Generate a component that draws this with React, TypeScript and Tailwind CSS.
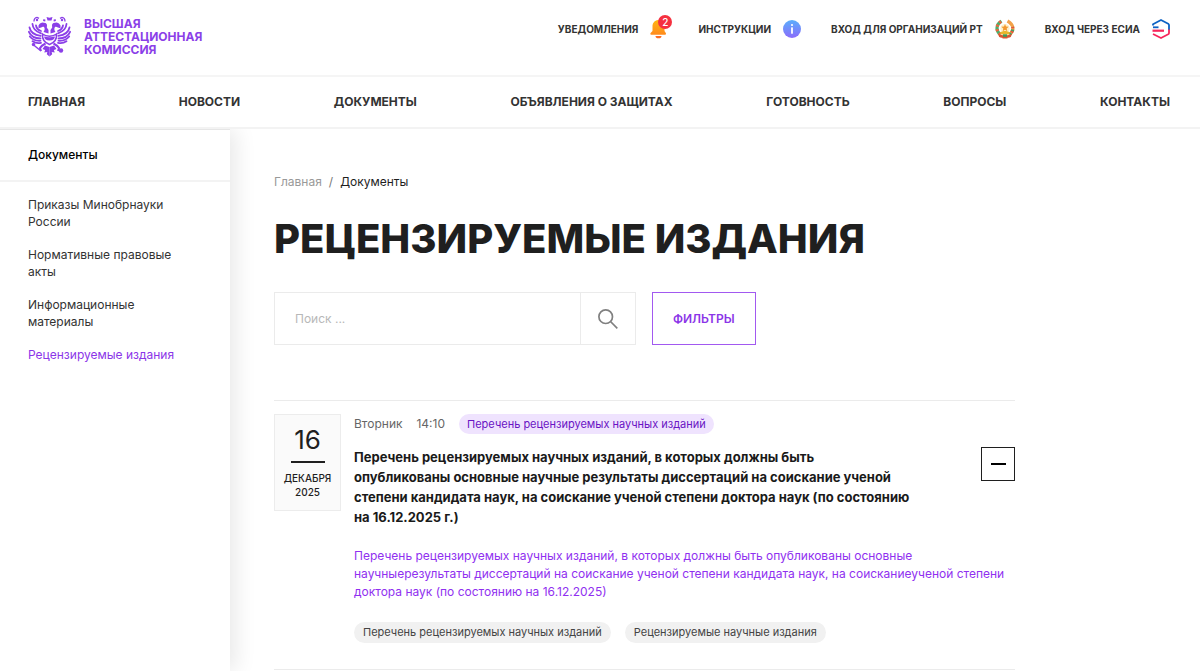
import type { ReactNode } from "react";
import clsx from "clsx";

const NAV = ["Главная", "Новости", "Документы", "Объявления о защитах", "Готовность", "Вопросы", "Контакты"];

const SIDEBAR = ["Приказы Минобрнауки России", "Нормативные правовые акты", "Информационные материалы", "Рецензируемые издания"];

const TAGS = ["Перечень рецензируемых научных изданий", "Рецензируемые научные издания"];

function EmblemHalf() {
	return (
		<g>
			{/* wing */}
			<g fill="none" stroke="currentColor" strokeWidth="1.8" strokeLinecap="round">
				<path d="M4.500 8c.3 4 3 7.500 8.500 9.300" />
				<path d="M1.500 11.500c.8 4.300 4.700 7.500 11.200 8.400" />
				<path d="M.9 15.800c1.700 4 5.700 6.500 11.600 6.600" />
				<path d="M1.800 20.500c2.500 3 6 4.500 10.700 4.200" />
				<path d="M4.500 25.200c2.500 1.700 5.500 2.300 8.500 1.600" />
				<path d="M8 9.500c.4 2.500 2 4.500 5 5.500" />
			</g>
			{/* crown and head */}
			<path d="M6 5.500C6 3 7 1.500 9 1.300l2 1" fill="none" stroke="currentColor" strokeWidth="1.3" />
			<circle cx="9" cy="4" r="1.200" fill="currentColor" />
			<path d="M10.500 9.500c.8-1.500 2-2.700 3.700-3l3.300.5c1 .6 1.500 1.500 1.500 2.500l-.2 2 1.700 2.500v3.500l-5-1.500c1.200-1.500 1.500-3.200.7-4.700-.8-.8-2-.6-3 .3l-2.700.7z" fill="currentColor" />
			<path d="m15.500 3 2 .8-.3 1.700-2.200-.5z" fill="currentColor" />
			{/* leg */}
			<path d="M17.500 27.500c-2 1-4 2-5.500 4.500l1 3" fill="none" stroke="currentColor" strokeWidth="2" />
			<path d="m17 29.500 4.500 1.500v9.500l-2.700-2.200.5-2.300-3 .5.8-2.500-2.600-1z" fill="currentColor" />
		</g>
	);
}

function Emblem() {
	return (
		<svg viewBox="0 0 43 41" className="w-[43px] h-[41px] shrink-0 text-[#8b3fe8]" aria-hidden="true">
			<EmblemHalf />
			<g transform="matrix(-1 0 0 1 43 0)">
				<EmblemHalf />
			</g>
			<path d="m18.500 1 3 .8 3-.8-1 3.500h-4z" fill="currentColor" />
			{/* shield */}
			<path d="M14.500 18c2 1.500 4.500 2.200 7 2.200s5-.7 7-2.200c.5 5-1.500 8.500-7 10.500-5.500-2-7.500-5.500-7-10.500z" fill="#fff" stroke="currentColor" strokeWidth="1.500" />
			<path d="M16 20.500c3.500 1 7.500 1 11 0-.5 2.500-2 4-5.500 4s-5-1.500-5.500-4z" fill="currentColor" />
			{/* sceptre and orb */}
			<path d="m5 28.500 8 6.500" stroke="currentColor" strokeWidth="1.500" />
			<circle cx="5.500" cy="28.500" r="1.700" fill="currentColor" />
			<circle cx="33" cy="34.500" r="2.200" fill="currentColor" />
		</svg>
	);
}

function BellIcon() {
	return (
		<svg viewBox="0 0 18 20" className="w-[18px] h-5" aria-hidden="true">
			<defs>
				<linearGradient id="bell" x1="0" y1="0" x2="0" y2="1">
					<stop offset="0" stopColor="#ffb612" />
					<stop offset="1" stopColor="#ff8a1c" />
				</linearGradient>
			</defs>
			<path d="M5.500 17h6a3 2.300 0 0 1-6 0z" fill="#fb6b22" />
			<path d="M8 1C4.500 1.500 2.500 4 2.500 7.500V12L.6 14c-.6.9-.2 1.700.7 1.700h13.800c.9 0 1.200-.8.7-1.700L14.500 12V7.500C14.500 4 12 1 8 1z" fill="url(#bell)" />
		</svg>
	);
}

function InfoIcon() {
	return (
		<svg viewBox="0 0 18 18" className="w-[18px] h-[18px]" aria-hidden="true">
			<defs>
				<linearGradient id="info" x1="0" y1="0" x2="0" y2="1">
					<stop offset="0" stopColor="#5aaefb" />
					<stop offset="1" stopColor="#8b6cfb" />
				</linearGradient>
			</defs>
			<circle cx="9" cy="9" r="9" fill="url(#info)" />
			<circle cx="9" cy="5" r="1.100" fill="#fff" />
			<rect x="8.100" y="7.200" width="1.800" height="6.600" rx=".6" fill="#fff" />
		</svg>
	);
}

function TajikEmblem() {
	return (
		<svg viewBox="0 0 20 20" className="w-5 h-5" aria-hidden="true">
			<g fill="none" strokeWidth="3.200">
				<path d="M5.500 15.500C.8 12 .5 6 6.500 2.200" stroke="#4caf6d" />
				<path d="M5.500 15.500C.8 12 .5 6 6.500 2.200" stroke="#f0643c" strokeDasharray="2 2.500" />
				<path d="M14.500 15.500C19.200 12 19.500 6 12.500 2" stroke="#f2a24a" />
				<path d="M14.500 15.500C17 13.500 18.200 11 17.700 8" stroke="#3fa366" strokeDasharray="2 2" />
				<path d="M16.500 13.500c1-1.500 1.500-3.500 1-5.500" stroke="#e8503a" strokeDasharray="1.500 3" />
			</g>
			<circle cx="10" cy="9.500" r="4.600" fill="#fdf0c8" />
			<path d="m10 5 1 2.500 2.700.2-2 1.800.6 2.700L10 10.800l-2.300 1.400.6-2.700-2-1.800 2.700-.2z" fill="#f3992f" />
			<path d="M5 13.500c3-2 7-2 10 0l-1 2H6z" fill="#e9b52c" />
			<path d="M3 15c4 1.800 10 1.800 14 0l-1.200 3c-3 1.300-8.600 1.300-11.600 0z" fill="#d9542f" />
			<path d="M8 15.300h4v2.500H8z" fill="#3f9a5a" />
			<path d="M7.500 18.500h5v1h-5z" fill="#d9542f" />
		</svg>
	);
}

function EsiaIcon() {
	return (
		<svg viewBox="0 0 18 20" className="w-[18px] h-5" fill="none" strokeWidth="1.800" aria-hidden="true">
			<path d="M1 6.500V5.200L9 1l7.200 3.800c.5.300.8.700.8 1.300v5" stroke="#0d62c4" strokeLinejoin="round" />
			<path d="M17 10.500V14c0 .6-.3 1-.8 1.300L9 19l-8-4" stroke="#f7255a" strokeLinejoin="round" />
			<path d="M1 8.300h5.500" stroke="#0d62c4" />
			<path d="M.5 11.700H12" stroke="#f7255a" strokeWidth="2.200" />
		</svg>
	);
}

function TopLink({ text, children }: { text: string; children: ReactNode }) {
	return (
		<a href="#" className="flex items-center gap-3 text-[10px] leading-5 font-bold uppercase whitespace-nowrap">
			{text}
			{children}
		</a>
	);
}

function Header() {
	return (
		<header>
			<div className="flex justify-between items-start pl-7 pr-[30px] pt-4 pb-[18px] border-b-2 border-[#f5f5f5]">
				<a href="#" className="flex items-center gap-[13px] text-[#8b3fe8]">
					<Emblem />
					<span className="text-xs leading-[13px] font-bold uppercase">
						Высшая
						<br />
						аттестационная
						<br />
						комиссия
					</span>
				</a>
				<div className="flex items-center gap-[30px] pt-[3px]">
					<TopLink text="Уведомления">
						<span className="relative">
							<BellIcon />
							<span className="absolute -top-1 left-2 w-[14px] h-[14px] rounded-full bg-[#f5303f] text-white text-[10px] leading-[14px] font-medium text-center">2</span>
						</span>
					</TopLink>
					<TopLink text="Инструкции">
						<InfoIcon />
					</TopLink>
					<TopLink text="Вход для организаций РТ">
						<TajikEmblem />
					</TopLink>
					<TopLink text="Вход через ЕСИА">
						<EsiaIcon />
					</TopLink>
				</div>
			</div>
			<nav className="flex justify-between pl-7 pr-[30px] py-4 border-b-2 border-[#f3f3f3]">
				{NAV.map((item) => (
					<a key={item} href="#" className="text-xs leading-[18px] font-bold uppercase whitespace-nowrap">
						{item}
					</a>
				))}
			</nav>
		</header>
	);
}

function Sidebar() {
	return (
		<aside className="w-[230px] shrink-0 bg-white border-t border-[#e6e6e6] shadow-[6px_0_20px_rgba(0,0,0,0.09)]">
			<h2 className="px-7 py-4 border-b-2 border-[#f3f3f3] text-xs leading-[18px] font-medium text-black">Документы</h2>
			<ul className="flex flex-col gap-4 pl-7 pr-12 pt-[14px]">
				{SIDEBAR.map((item, i) => (
					<li key={item} className="text-xs leading-[17px]">
						<a href="#" className={clsx(i === 3 && "text-[#8b35e8] whitespace-nowrap")}>
							{item}
						</a>
					</li>
				))}
			</ul>
		</aside>
	);
}

function Search() {
	return (
		<form className="flex gap-4 mt-[29px]" onSubmit={(e) => e.preventDefault()}>
			<div className="flex w-[362px] h-[53px] border border-[#ebebeb]">
				<input type="text" aria-label="Поиск" placeholder="Поиск ..." className="grow min-w-0 px-5 text-xs placeholder:text-[#b8b8b8] outline-none" />
				<button type="submit" aria-label="Найти" className="flex items-center justify-center w-[55px] border-l border-[#ebebeb]">
					<svg viewBox="0 0 20 20" className="w-5 h-5" fill="none" stroke="#808080" strokeWidth="1.700" aria-hidden="true">
						<circle cx="7.700" cy="7.700" r="6.800" />
						<path d="m12.500 12.500 6.800 6.800" />
					</svg>
				</button>
			</div>
			<button type="button" className="px-5 border border-[#a259f0] text-xs font-semibold uppercase text-[#8b35e8]">
				Фильтры
			</button>
		</form>
	);
}

function Article() {
	return (
		<article className="flex items-start border-y border-[#ebebeb] mt-[55px] pt-[13px] pb-[26px]">
			<time dateTime="2025-12-16" className="flex flex-col items-center w-[67px] h-[97px] shrink-0 pt-3 bg-[#fafafa] border border-[#ececec] text-[#1f1f1f]">
				<span className="w-[34px] pb-2 border-b-2 text-[26px] leading-[26px] text-center">16</span>
				<span className="mt-2 text-[10px] leading-[14px] font-medium uppercase text-center">
					Декабря
					<br />
					2025
				</span>
			</time>
			<div className="grow min-w-0 ml-[13px]">
				<div className="flex items-center gap-[14px] text-xs leading-5 text-[#666]">
					<span>Вторник</span>
					<span>14:10</span>
					<a href="#" className="px-2 rounded-full bg-[#efe3fe] text-[11px] text-[#6a14c4]">
						{TAGS[0]}
					</a>
				</div>
				<div className="flex items-start justify-between mt-[13px]">
					<h3 className="text-[13px] leading-5 font-bold text-[#1a1a1a]">
						Перечень рецензируемых научных изданий, в которых должны быть
						<br />
						опубликованы основные научные результаты диссертаций на соискание ученой
						<br />
						степени кандидата наук, на соискание ученой степени доктора наук (по состоянию
						<br />
						на 16.12.2025 г.)
					</h3>
					<button type="button" aria-label="Свернуть" className="flex items-center justify-center w-[34px] h-[34px] border border-[#1f1f1f]">
						<span className="w-[15px] h-[2px] bg-black" />
					</button>
				</div>
				<a href="#" className="block mt-5 text-xs leading-[18px] text-[#9030f0]">
					Перечень рецензируемых научных изданий, в которых должны быть опубликованы основные научныерезультаты диссертаций на соискание ученой степени кандидата наук, на соисканиеученой степени доктора наук (по состоянию на 16.12.2025)
				</a>
				<div className="flex gap-[14px] mt-[21px]">
					{TAGS.map((tag) => (
						<a key={tag} href="#" className="px-[9px] rounded-full bg-[#f1f1f1] text-[11px] leading-[21px] text-[#444]">
							{tag}
						</a>
					))}
				</div>
			</div>
		</article>
	);
}

export default function App() {
	return (
		<div className="flex flex-col min-h-screen bg-white font-[Inter,sans-serif] text-[#333]">
			<Header />
			<div className="flex grow overflow-hidden">
				<Sidebar />
				<main className="grow min-w-0 px-11 pt-[44px]">
					<div className="max-w-[741px]">
						<div className="flex gap-[7px] text-xs leading-[18px]">
							<a href="#" className="text-[#999]">
								Главная
							</a>
							<span className="text-[#777]">/</span>
							<span className="text-[#1f1f1f]">Документы</span>
						</div>
						<h1 className="mt-6 text-[40px] leading-[48px] font-extrabold uppercase whitespace-nowrap text-[#1f1f1f]">Рецензируемые издания</h1>
						<Search />
						<Article />
					</div>
				</main>
			</div>
		</div>
	);
}
